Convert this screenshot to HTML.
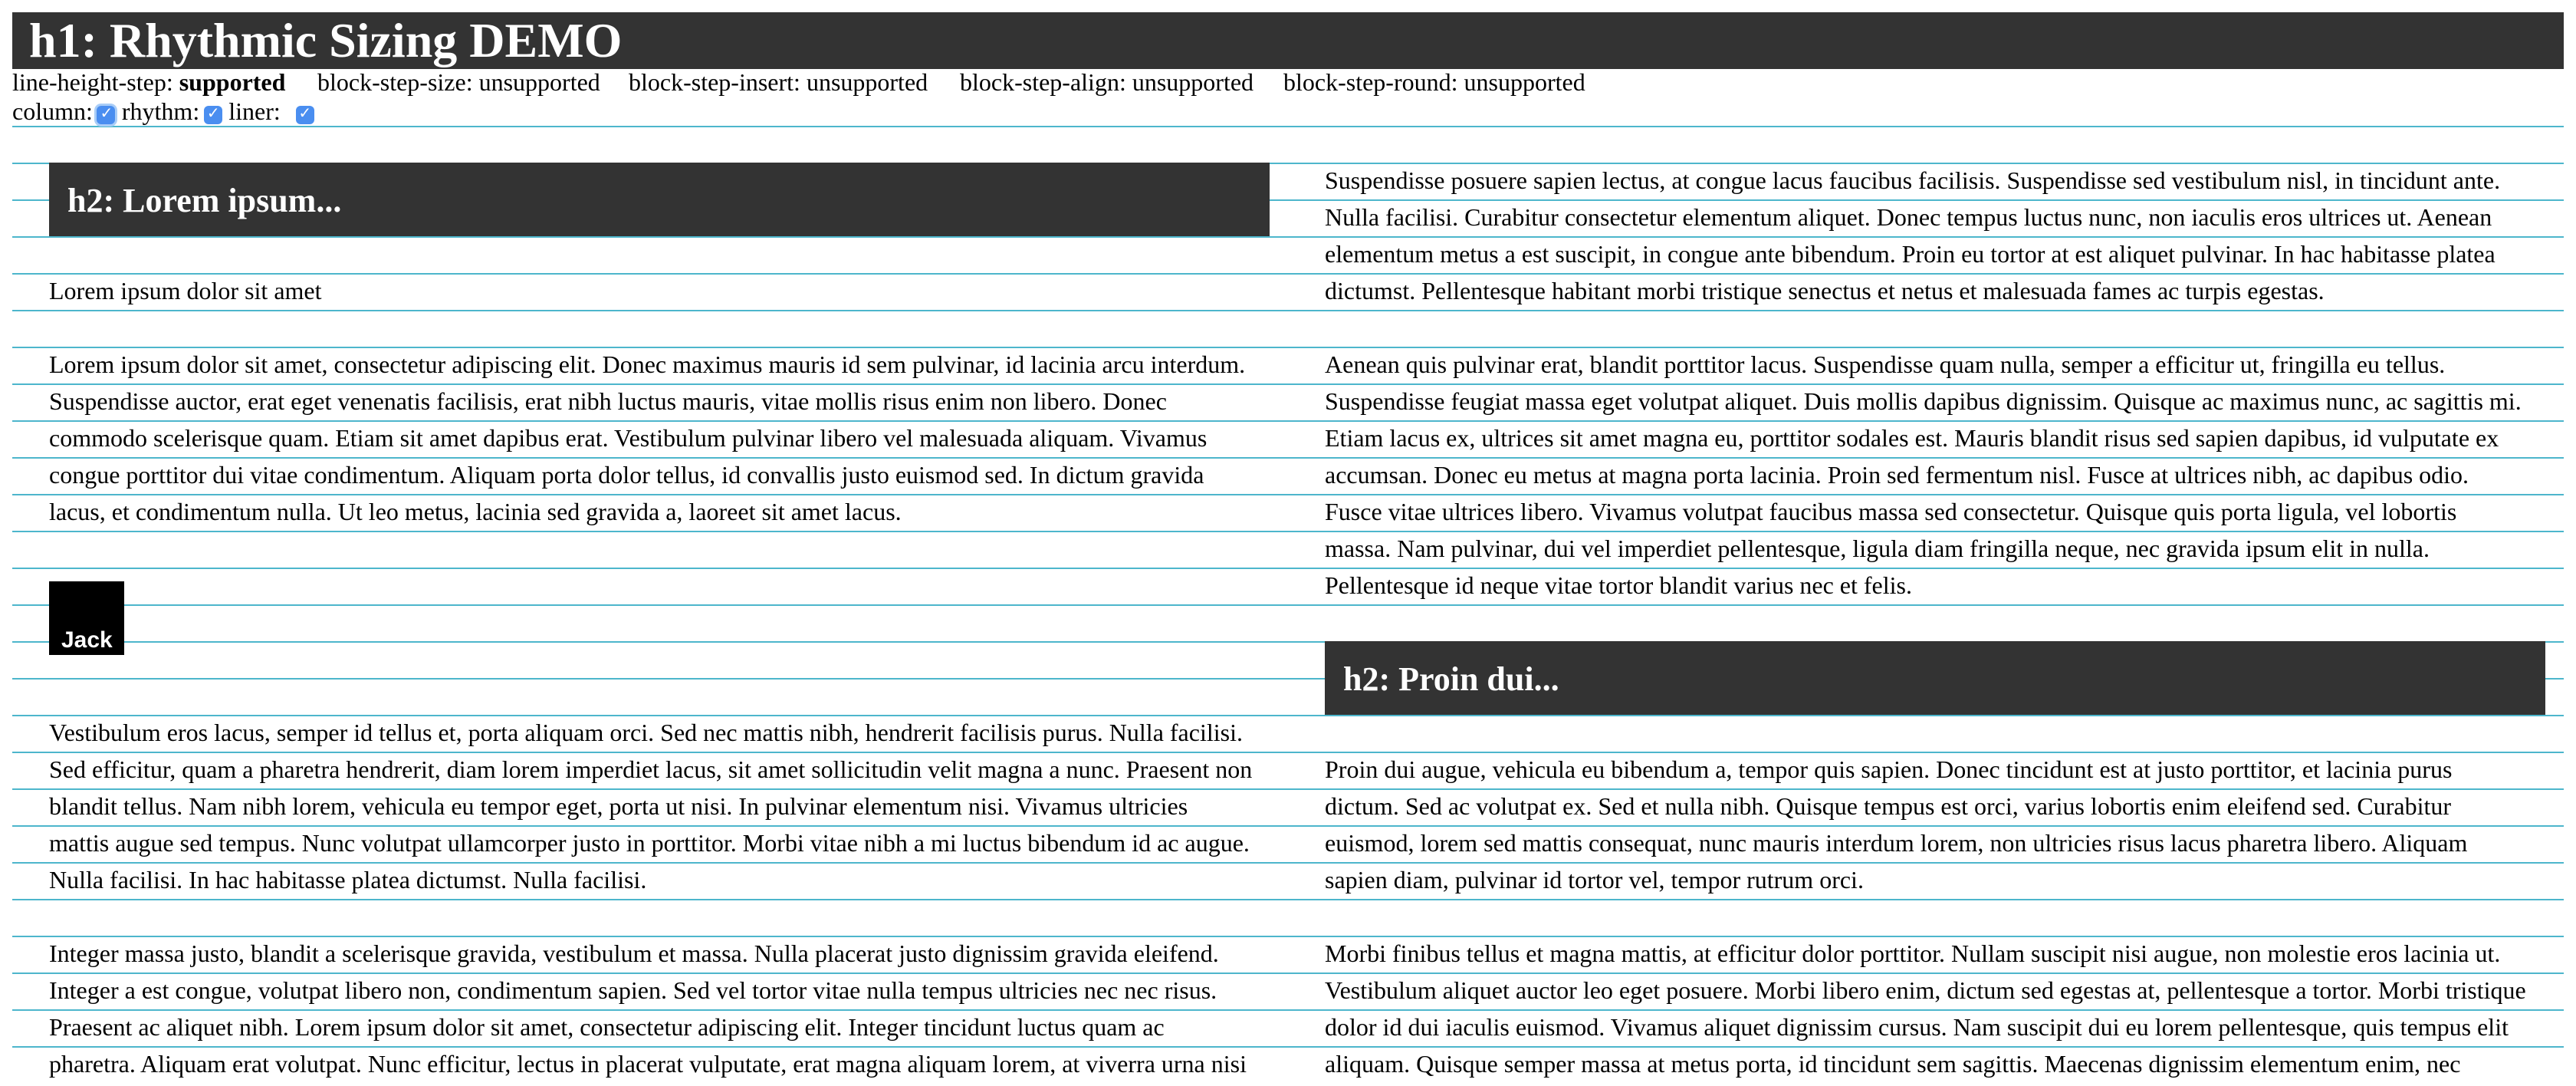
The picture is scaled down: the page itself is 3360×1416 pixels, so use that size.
<!DOCTYPE html>
<html><head><meta charset="utf-8"><style>
html,body{margin:0;padding:0;background:#fff;overflow:hidden;width:3360px;height:1400px}
#w{position:absolute;left:0;top:0;width:1680px;height:700px;transform:scale(2);transform-origin:0 0;font-family:"Liberation Serif",serif;font-size:16px;color:#000}
.lines{position:absolute;left:8px;right:8px;top:82px;height:620px;background:repeating-linear-gradient(to bottom,#4db6cc 0,#4db6cc 1px,transparent 1px,transparent 24px)}
.h1{position:absolute;left:8px;right:8px;top:8px;height:37px;background:#333;color:#fff;font-weight:bold;font-size:32px;line-height:37px;padding-left:11px;box-sizing:border-box}
.a{position:absolute;white-space:nowrap;line-height:18px}
.h2{position:absolute;height:48px;background:#333;color:#fff;font-weight:bold;font-size:22px;line-height:49px;padding-left:12px;box-sizing:border-box;width:796px}
.t{position:absolute;white-space:nowrap;line-height:26px;height:24px}
.cb{display:inline-block;width:12px;height:12px;background:#4a8ef0;border-radius:3px;color:#fff;font-size:10px;line-height:12px;text-align:center;vertical-align:1px;font-family:"DejaVu Sans",sans-serif}
.jack{position:absolute;left:32px;top:379px;width:49px;height:48px;background:#000;color:#fff;font-family:"Liberation Sans",sans-serif;font-weight:bold;font-size:15px}
.jack span{position:absolute;left:8px;bottom:1px}
</style></head><body><div id="w">
<div class="lines"></div>
<div class="h1">h1: Rhythmic Sizing DEMO</div>
<div class="a" style="left:8px;top:46px">line-height-step: <b>supported</b></div>
<div class="a" style="left:207px;top:46px">block-step-size: unsupported</div>
<div class="a" style="left:410px;top:46px">block-step-insert: unsupported</div>
<div class="a" style="left:626px;top:46px">block-step-align: unsupported</div>
<div class="a" style="left:837px;top:46px">block-step-round: unsupported</div>
<div class="a" style="left:8px;top:65px">column:<span class="cb" style="margin-left:3px;margin-right:4px;box-shadow:0 0 0 1.5px #a9cdf7">✓</span>rhythm:<span class="cb" style="margin-left:3px;margin-right:4px">✓</span>liner: <span class="cb" style="margin-left:6px">✓</span></div>

<div class="h2" style="left:32px;top:106px">h2: Lorem ipsum...</div>
<div class="t" style="left:32px;top:178px">Lorem ipsum dolor sit amet</div>
<div class="t" style="left:32px;top:226px">Lorem ipsum dolor sit amet, consectetur adipiscing elit. Donec maximus mauris id sem pulvinar, id lacinia arcu interdum.</div>
<div class="t" style="left:32px;top:250px">Suspendisse auctor, erat eget venenatis facilisis, erat nibh luctus mauris, vitae mollis risus enim non libero. Donec</div>
<div class="t" style="left:32px;top:274px">commodo scelerisque quam. Etiam sit amet dapibus erat. Vestibulum pulvinar libero vel malesuada aliquam. Vivamus</div>
<div class="t" style="left:32px;top:298px">congue porttitor dui vitae condimentum. Aliquam porta dolor tellus, id convallis justo euismod sed. In dictum gravida</div>
<div class="t" style="left:32px;top:322px">lacus, et condimentum nulla. Ut leo metus, lacinia sed gravida a, laoreet sit amet lacus.</div>
<div class="jack"><span>Jack</span></div>
<div class="t" style="left:32px;top:466px">Vestibulum eros lacus, semper id tellus et, porta aliquam orci. Sed nec mattis nibh, hendrerit facilisis purus. Nulla facilisi.</div>
<div class="t" style="left:32px;top:490px">Sed efficitur, quam a pharetra hendrerit, diam lorem imperdiet lacus, sit amet sollicitudin velit magna a nunc. Praesent non</div>
<div class="t" style="left:32px;top:514px">blandit tellus. Nam nibh lorem, vehicula eu tempor eget, porta ut nisi. In pulvinar elementum nisi. Vivamus ultricies</div>
<div class="t" style="left:32px;top:538px">mattis augue sed tempus. Nunc volutpat ullamcorper justo in porttitor. Morbi vitae nibh a mi luctus bibendum id ac augue.</div>
<div class="t" style="left:32px;top:562px">Nulla facilisi. In hac habitasse platea dictumst. Nulla facilisi.</div>
<div class="t" style="left:32px;top:610px">Integer massa justo, blandit a scelerisque gravida, vestibulum et massa. Nulla placerat justo dignissim gravida eleifend.</div>
<div class="t" style="left:32px;top:634px">Integer a est congue, volutpat libero non, condimentum sapien. Sed vel tortor vitae nulla tempus ultricies nec nec risus.</div>
<div class="t" style="left:32px;top:658px">Praesent ac aliquet nibh. Lorem ipsum dolor sit amet, consectetur adipiscing elit. Integer tincidunt luctus quam ac</div>
<div class="t" style="left:32px;top:682px">pharetra. Aliquam erat volutpat. Nunc efficitur, lectus in placerat vulputate, erat magna aliquam lorem, at viverra urna nisi</div>

<div class="t" style="left:864px;top:106px">Suspendisse posuere sapien lectus, at congue lacus faucibus facilisis. Suspendisse sed vestibulum nisl, in tincidunt ante.</div>
<div class="t" style="left:864px;top:130px">Nulla facilisi. Curabitur consectetur elementum aliquet. Donec tempus luctus nunc, non iaculis eros ultrices ut. Aenean</div>
<div class="t" style="left:864px;top:154px">elementum metus a est suscipit, in congue ante bibendum. Proin eu tortor at est aliquet pulvinar. In hac habitasse platea</div>
<div class="t" style="left:864px;top:178px">dictumst. Pellentesque habitant morbi tristique senectus et netus et malesuada fames ac turpis egestas.</div>
<div class="t" style="left:864px;top:226px">Aenean quis pulvinar erat, blandit porttitor lacus. Suspendisse quam nulla, semper a efficitur ut, fringilla eu tellus.</div>
<div class="t" style="left:864px;top:250px">Suspendisse feugiat massa eget volutpat aliquet. Duis mollis dapibus dignissim. Quisque ac maximus nunc, ac sagittis mi.</div>
<div class="t" style="left:864px;top:274px">Etiam lacus ex, ultrices sit amet magna eu, porttitor sodales est. Mauris blandit risus sed sapien dapibus, id vulputate ex</div>
<div class="t" style="left:864px;top:298px">accumsan. Donec eu metus at magna porta lacinia. Proin sed fermentum nisl. Fusce at ultrices nibh, ac dapibus odio.</div>
<div class="t" style="left:864px;top:322px">Fusce vitae ultrices libero. Vivamus volutpat faucibus massa sed consectetur. Quisque quis porta ligula, vel lobortis</div>
<div class="t" style="left:864px;top:346px">massa. Nam pulvinar, dui vel imperdiet pellentesque, ligula diam fringilla neque, nec gravida ipsum elit in nulla.</div>
<div class="t" style="left:864px;top:370px">Pellentesque id neque vitae tortor blandit varius nec et felis.</div>
<div class="h2" style="left:864px;top:418px">h2: Proin dui...</div>
<div class="t" style="left:864px;top:490px">Proin dui augue, vehicula eu bibendum a, tempor quis sapien. Donec tincidunt est at justo porttitor, et lacinia purus</div>
<div class="t" style="left:864px;top:514px">dictum. Sed ac volutpat ex. Sed et nulla nibh. Quisque tempus est orci, varius lobortis enim eleifend sed. Curabitur</div>
<div class="t" style="left:864px;top:538px">euismod, lorem sed mattis consequat, nunc mauris interdum lorem, non ultricies risus lacus pharetra libero. Aliquam</div>
<div class="t" style="left:864px;top:562px">sapien diam, pulvinar id tortor vel, tempor rutrum orci.</div>
<div class="t" style="left:864px;top:610px">Morbi finibus tellus et magna mattis, at efficitur dolor porttitor. Nullam suscipit nisi augue, non molestie eros lacinia ut.</div>
<div class="t" style="left:864px;top:634px">Vestibulum aliquet auctor leo eget posuere. Morbi libero enim, dictum sed egestas at, pellentesque a tortor. Morbi tristique</div>
<div class="t" style="left:864px;top:658px">dolor id dui iaculis euismod. Vivamus aliquet dignissim cursus. Nam suscipit dui eu lorem pellentesque, quis tempus elit</div>
<div class="t" style="left:864px;top:682px">aliquam. Quisque semper massa at metus porta, id tincidunt sem sagittis. Maecenas dignissim elementum enim, nec</div>
</div></body></html>
